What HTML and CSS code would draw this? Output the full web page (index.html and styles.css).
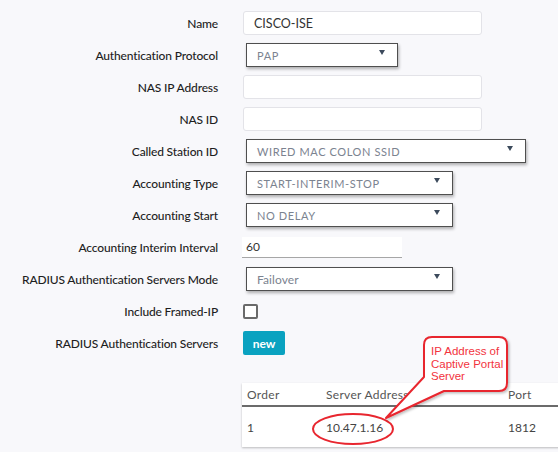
FILE: index.html
```html
<!DOCTYPE html>
<html>
<head>
<meta charset="utf-8">
<link rel="stylesheet" href="styles.css">
</head>
<body>
<div class="page">
  <div class="form">
    <div class="lbl">Name</div>
    <div class="ctl"><div class="field wide">CISCO-ISE</div></div>

    <div class="lbl">Authentication Protocol</div>
    <div class="ctl"><div class="select w-sm"><span>PAP</span><i class="caret"></i></div></div>

    <div class="lbl">NAS IP Address</div>
    <div class="ctl"><div class="field wide"></div></div>

    <div class="lbl">NAS ID</div>
    <div class="ctl"><div class="field wide"></div></div>

    <div class="lbl">Called Station ID</div>
    <div class="ctl"><div class="select w-lg"><span>WIRED MAC COLON SSID</span><i class="caret"></i></div></div>

    <div class="lbl">Accounting Type</div>
    <div class="ctl"><div class="select w-md"><span>START-INTERIM-STOP</span><i class="caret"></i></div></div>

    <div class="lbl">Accounting Start</div>
    <div class="ctl"><div class="select w-md"><span>NO DELAY</span><i class="caret"></i></div></div>

    <div class="lbl">Accounting Interim Interval</div>
    <div class="ctl"><div class="field line">60</div></div>

    <div class="lbl">RADIUS Authentication Servers Mode</div>
    <div class="ctl"><div class="select w-md"><span class="plain">Failover</span><i class="caret"></i></div></div>

    <div class="lbl">Include Framed-IP</div>
    <div class="ctl"><div class="check"></div></div>

    <div class="lbl">RADIUS Authentication Servers</div>
    <div class="ctl"><button class="btn">new</button></div>
  </div>

  <div class="servers">
    <div class="trow head">
      <div class="c1">Order</div>
      <div class="c2">Server Address</div>
      <div class="c3">Port</div>
    </div>
    <div class="trow body">
      <div class="c1">1</div>
      <div class="c2">10.47.1.16</div>
      <div class="c3">1812</div>
    </div>
  </div>

  <svg class="marks" width="558" height="452" viewBox="0 0 558 452">
    <defs>
      <filter id="soft" x="-20%" y="-20%" width="140%" height="140%">
        <feDropShadow dx="1.5" dy="1.5" stdDeviation="1" flood-color="#000" flood-opacity="0.25"/>
      </filter>
    </defs>
    <ellipse cx="353" cy="429" rx="40" ry="15" fill="none" stroke="#e8262f" stroke-width="2"/>
    <path d="M432,337 H499 Q507,337 507,345 V383 Q507,391 499,391 H444 L386,418 L424,377 V345 Q424,337 432,337 Z"
          fill="#ffffff" stroke="#e8262f" stroke-width="2" stroke-linejoin="round" filter="url(#soft)"/>
  </svg>
  <div class="note">IP Address of Captive Portal Server</div>
</div>
</body>
</html>
```

FILE: styles.css
```css
html, body {
  margin: 0;
  padding: 0;
}

body {
  width: 558px;
  height: 452px;
  overflow: hidden;
  background: #f8f8fb;
  font-family: Lato, "Open Sans", sans-serif;
  color: #222;
}

.page {
  position: relative;
  width: 558px;
  height: 452px;
}

.form {
  display: grid;
  grid-template-columns: 218px 1fr;
  grid-auto-rows: 32px;
  column-gap: 24px;
  align-items: center;
  padding-top: 7px;
}

.lbl {
  text-align: right;
  font-size: 12px;
  letter-spacing: -0.15px;
  font-weight: 500;
  color: #1e1e1e;
  white-space: nowrap;
}

.ctl {
  display: flex;
  align-items: center;
}

.field {
  box-sizing: border-box;
  height: 24px;
  background: #fff;
  border: 1px solid #e3e3e8;
  border-radius: 3px;
  font-size: 12.5px;
  color: #333;
  display: flex;
  align-items: center;
  padding-left: 10px;
}

.field.wide {
  width: 239px;
  margin-left: 1px;
}

.field.line {
  width: 160px;
  height: 21px;
  border: none;
  border-bottom: 1px solid #a6a6a6;
  border-radius: 0;
  padding-left: 4px;
  font-size: 12px;
}

.select {
  box-sizing: border-box;
  height: 24px;
  margin-left: 4px;
  background: #fff;
  border: 1px solid #4f4f4f;
  box-shadow: 1px 2px 3px rgba(0, 0, 0, 0.3);
  display: flex;
  align-items: center;
  justify-content: space-between;
  padding: 0 12px 0 10px;
}

.select span {
  font-size: 11px;
  letter-spacing: 0.6px;
  color: #7b8390;
  text-transform: uppercase;
}

.select span.plain {
  text-transform: none;
  font-size: 12px;
  letter-spacing: 0.1px;
}

.caret {
  width: 0;
  height: 0;
  border-left: 3px solid transparent;
  border-right: 3px solid transparent;
  border-top: 5px solid #3c4a5c;
  margin-top: -5px;
}

.w-sm { width: 152px; }
.w-md { width: 207px; }
.w-lg { width: 280px; }

.check {
  box-sizing: border-box;
  width: 15px;
  height: 15px;
  margin-left: 1px;
  border: 2px solid #6a6a6a;
  border-radius: 2px;
  background: #fff;
}

.btn {
  margin-left: 1px;
  width: 42px;
  height: 24px;
  border: none;
  border-radius: 2px;
  background: #0aa2c0;
  color: #fff;
  font-family: inherit;
  font-size: 12px;
  font-weight: 700;
  padding: 0;
}

.servers {
  margin: 24px 0 0 242px;
  width: 340px;
  background: #fff;
  box-shadow: 0 1px 2px rgba(0, 0, 0, 0.25);
}

.trow {
  display: grid;
  grid-template-columns: 79px 182px 1fr;
  align-items: center;
  font-size: 12px;
  color: #555;
}

.trow > div {
  padding-left: 5px;
}

.trow.head {
  height: 22px;
  border-bottom: 2px solid #6b6b6b;
  letter-spacing: 0.3px;
}

.trow.body {
  height: 40px;
  color: #444;
}

.marks {
  position: absolute;
  left: 0;
  top: 0;
  pointer-events: none;
}

.note {
  position: absolute;
  left: 431px;
  top: 345px;
  width: 74px;
  font-family: "Liberation Sans", Arial, sans-serif;
  font-size: 11.5px;
  line-height: 12.5px;
  color: #f2333d;
}
```
